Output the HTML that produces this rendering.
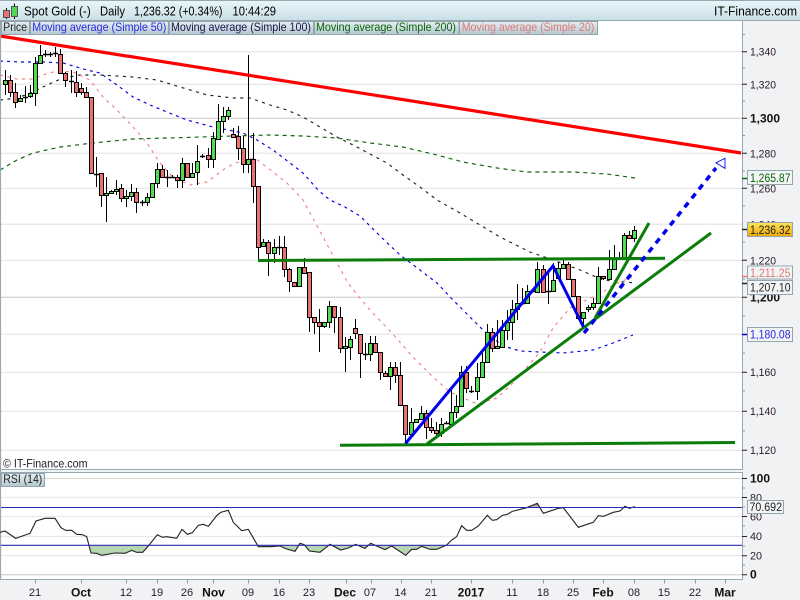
<!DOCTYPE html>
<html><head><meta charset="utf-8"><style>
html,body{margin:0;padding:0;background:#fff}
svg{display:block;font-family:"Liberation Sans",Arial,sans-serif}
</style></head><body>
<svg xmlns="http://www.w3.org/2000/svg" width="800" height="600" viewBox="0 0 800 600">
<defs>
<linearGradient id="hd" x1="0" y1="0" x2="0" y2="1"><stop offset="0" stop-color="#e9f7fb"/><stop offset="1" stop-color="#c9dfe6"/></linearGradient>
<linearGradient id="bt" x1="0" y1="0" x2="0" y2="1"><stop offset="0" stop-color="#e6f0f4"/><stop offset="1" stop-color="#b4c6ce"/></linearGradient>
<linearGradient id="gd" x1="0" y1="0" x2="0" y2="1"><stop offset="0" stop-color="#ffe45c"/><stop offset="1" stop-color="#eeaa00"/></linearGradient>
<clipPath id="main"><rect x="1" y="21" width="741" height="448"/></clipPath>
</defs>
<rect width="800" height="600" fill="#f0f2f4"/>
<rect x="1" y="21" width="741" height="448" fill="#fff"/>
<rect x="1" y="472" width="741" height="107" fill="#fff"/>
<!-- grid -->
<g stroke="#e9e9e9" stroke-width="1.3" fill="none">
<path d="M1 51.7H742M1 84.3H742M1 153.3H742M1 188.3H742M1 224.3H742M1 260.3H742M1 334.3H742M1 372.3H742M1 411.3H742M1 450.3H742M1 497.5H742M1 516.5H742M1 536.5H742M1 555.7H742"/>
<path stroke="#d8d8d8" d="M1 118.3H742M1 297.3H742M1 478.5H742M1 574.7H742"/>
</g>
<!-- moving averages -->
<g fill="none" stroke-width="1.15" clip-path="url(#main)">
<polyline stroke="#0000e0" stroke-dasharray="3 4" points="0,61 20,62 43,62 63,63 87,70 100,73 117,85 133,97 150,105 167,112 187,120 213,127 243,133 257,140 273,150 290,163 303,173 318,190 330,200 345,207 360,216 380,236 400,255 420,270 437,283 453,300 470,317 483,330 503,346 520,351 540,352 563,353 593,350 613,343 633,335"/>
<polyline stroke="#222" stroke-dasharray="3 4.5" points="0,100 17,98 33,92 47,85 63,78 80,75 100,75 133,77 157,80 180,87 207,95 233,98 250,98 270,105 287,110 303,117 320,127 337,137 353,145 370,154 387,163 403,175 420,187 437,200 460,213 480,225 500,237 530,252 553,260 580,270 603,280 635,283"/>
<polyline stroke="#0a640a" stroke-dasharray="4 4" points="0,170 17,160 33,153 60,147 93,143 133,139 167,138 200,137 233,136 270,135 303,136 337,138 370,143 403,147 437,155 463,162 497,168 527,172 573,172 607,174 635,178"/>
<polyline stroke="#ea8484" stroke-dasharray="3 4.5" points="0,75 17,79 33,79 43,75 57,71 73,72 90,80 103,97 117,110 133,127 147,143 160,163 173,177 190,185 207,182 227,167 243,160 255,158 273,172 287,183 303,200 322,235 337,263 348,283 359,297 370,310 392,333 413,357 433,377 450,392 477,404 497,398 513,383 527,367 540,352 553,328 570,308 603,292 613,285 632,277"/>
</g>
<!-- wicks -->
<path fill="none" stroke="#000" stroke-width="1" d="M5.5 70V95M10.5 75V97M15.5 83V108M20.5 95V102M25.5 86V103M30.5 85V98M35.5 57V106M40.5 45V63M45.5 50V57M50.5 52V57M55.5 47V57M60.5 49V73M65.5 72V87M71.5 70V93M76.5 71V97M81.5 83V95M86.5 87V97M96.5 157V187M101.5 173V207M106.5 177V222M111.5 190V194M116.5 180V195M121.5 184V202M126.5 190V207M131.5 184V201M136.5 188V213M142.5 200V206M147.5 193V206M157.5 163V188M162.5 165V178M167.5 170V187M172.5 175V178M177.5 175V188M182.5 158V188M192.5 163V178M197.5 145V185M202.5 154V158M208.5 148V168M213.5 132V168M218.5 104V139M223.5 107V133M228.5 107V120M233.5 128V137M238.5 126V160M243.5 136V173M248.5 55V173M253.5 133V203M258.5 186V262M263.5 239V247M268.5 240V276M274.5 239V263M279.5 236V255M284.5 236V277M289.5 268V292M294.5 282V287M304.5 258V273M309.5 272V332M314.5 317V334M319.5 309V352M324.5 322V328M329.5 301V328M334.5 306V333M340.5 307V353M345.5 337V372M350.5 336V360M355.5 319V339M360.5 334V378M365.5 343V360M370.5 336V361M375.5 336V353M380.5 352V380M385.5 371V376M390.5 362V390M395.5 362V383M400.5 362V405M405.5 405V443M411.5 408V437M416.5 419V423M421.5 406V419M426.5 410V439M431.5 418V433M436.5 422V437M441.5 418V437M446.5 421V424M451.5 388V425M456.5 395V418M461.5 366V406M466.5 366V393M471.5 386V393M477.5 363V400M482.5 353V378M487.5 324V362M492.5 328V352M497.5 320V349M502.5 320V347M507.5 310V340M512.5 300V340M517.5 284V320M522.5 288V305M527.5 285V303M537.5 262V292M543.5 265V292M548.5 269V304M553.5 263V291M558.5 262V278M563.5 260V268M568.5 262V279M578.5 296V320M583.5 312V327M588.5 305V312M593.5 298V310M598.5 267V303M603.5 276V280M609.5 250V279M614.5 245V269M619.5 252V260M624.5 233V258M629.5 231V238M634.5 226V242"/>
<!-- doji -->
<path fill="none" stroke="#000" stroke-width="1.4" d="M23 97.5h5M43 54.5h5M48 54.5h5M53 53.5h5M69 81.5h5M94 174.5h5M140 202.5h5M165 177.5h5M170 177.5h5M200 156.5h5M277 247.5h5M363 354.5h5M444 423.5h5M469 391.5h5M520 303.5h5M530 291.5h5M546 291.5h5M617 258.5h5"/>
<!-- red bodies -->
<path fill="#ec7070" stroke="#000" stroke-width="1" d="M8.5 80.5h4v12h-4zM13.5 92.5h4v10h-4zM58.5 54.5h4v19h-4zM63.5 73.5h4v7h-4zM74.5 82.5h4v10h-4zM79.5 88.5h4v4h-4zM84.5 92.5h4v5h-4zM89.5 97.5h4v76h-4zM99.5 173.5h4v22h-4zM119.5 188.5h4v10h-4zM134.5 192.5h4v10h-4zM160.5 169.5h4v8h-4zM175.5 177.5h4v3h-4zM185.5 163.5h4v14h-4zM206.5 155.5h4v4h-4zM231.5 134.5h4v3h-4zM236.5 136.5h4v12h-4zM241.5 148.5h4v16h-4zM251.5 159.5h4v27h-4zM256.5 186.5h4v61h-4zM266.5 242.5h4v11h-4zM282.5 247.5h4v22h-4zM287.5 269.5h4v12h-4zM292.5 282.5h4v4h-4zM302.5 267.5h4v6h-4zM307.5 272.5h4v45h-4zM312.5 317.5h4v5h-4zM317.5 322.5h4v4h-4zM332.5 306.5h4v11h-4zM338.5 317.5h4v31h-4zM353.5 328.5h4v5h-4zM358.5 334.5h4v19h-4zM373.5 343.5h4v9h-4zM378.5 352.5h4v20h-4zM383.5 373.5h4v3h-4zM393.5 367.5h4v8h-4zM398.5 375.5h4v30h-4zM403.5 405.5h4v29h-4zM424.5 413.5h4v14h-4zM429.5 427.5h4v3h-4zM434.5 430.5h4v3h-4zM464.5 372.5h4v16h-4zM490.5 332.5h4v16h-4zM541.5 269.5h4v23h-4zM566.5 264.5h4v15h-4zM571.5 279.5h4v17h-4zM576.5 296.5h4v22h-4zM601.5 276.5h4v2h-4zM627.5 235.5h4v3h-4z"/>
<!-- green bodies -->
<path fill="#4fdc4f" stroke="#000" stroke-width="1" d="M3.5 80.5h4v4h-4zM18.5 98.5h4v3h-4zM28.5 93.5h4v3h-4zM33.5 63.5h4v30h-4zM38.5 55.5h4v8h-4zM104.5 193.5h4v2h-4zM109.5 191.5h4v2h-4zM114.5 189.5h4v2h-4zM124.5 196.5h4v2h-4zM129.5 192.5h4v4h-4zM145.5 197.5h4v5h-4zM150.5 183.5h4v14h-4zM155.5 169.5h4v14h-4zM180.5 163.5h4v17h-4zM190.5 173.5h4v4h-4zM195.5 161.5h4v11h-4zM211.5 138.5h4v21h-4zM216.5 121.5h4v18h-4zM221.5 116.5h4v5h-4zM226.5 110.5h4v6h-4zM246.5 159.5h4v5h-4zM261.5 242.5h4v4h-4zM272.5 247.5h4v6h-4zM297.5 267.5h4v19h-4zM322.5 322.5h4v4h-4zM327.5 306.5h4v16h-4zM343.5 346.5h4v2h-4zM348.5 339.5h4v8h-4zM368.5 343.5h4v11h-4zM388.5 367.5h4v9h-4zM409.5 422.5h4v12h-4zM414.5 419.5h4v3h-4zM419.5 413.5h4v6h-4zM439.5 424.5h4v9h-4zM449.5 412.5h4v12h-4zM454.5 406.5h4v6h-4zM459.5 372.5h4v34h-4zM475.5 377.5h4v14h-4zM480.5 362.5h4v15h-4zM485.5 332.5h4v30h-4zM495.5 346.5h4v2h-4zM500.5 330.5h4v17h-4zM505.5 322.5h4v8h-4zM510.5 309.5h4v13h-4zM515.5 303.5h4v6h-4zM525.5 291.5h4v12h-4zM535.5 269.5h4v23h-4zM551.5 280.5h4v11h-4zM556.5 268.5h4v10h-4zM561.5 264.5h4v4h-4zM581.5 312.5h4v6h-4zM586.5 307.5h4v2h-4zM591.5 303.5h4v4h-4zM596.5 276.5h4v27h-4zM607.5 269.5h4v10h-4zM612.5 258.5h4v11h-4zM622.5 235.5h4v23h-4zM632.5 230.5h4v8h-4z"/>
<!-- drawn lines -->
<g fill="none" stroke-linecap="butt">
<path d="M0 36L741 153" stroke="#ff0000" stroke-width="3.2"/>
<path d="M258 260.5L665 258.3M340 445.3L735 442.5" stroke="#0a7d0a" stroke-width="3"/>
<path d="M427 444L711 233M595 318L649 223" stroke="#0a7d0a" stroke-width="3"/>
<path d="M405.5 443.5L553 266L583.5 327" stroke="#0000ee" stroke-width="3"/>
<path d="M584 333L716 168" stroke="#0000ee" stroke-width="3.5" stroke-dasharray="6 5.5"/>
<path d="M716 162.8L725 158.3V168.3Z" stroke="#1a1aee" stroke-width="1" fill="#fff"/>
</g>
<!-- borders -->
<g fill="none" stroke="#98a8b2" stroke-width="1">
<path d="M742.5 21V469.5H0M742.5 472V579.5H0M0 472.5H742.5" />
<path d="M.5 21V579" stroke-width="1.2"/>
</g>
<!-- header -->
<rect x="0" y="0" width="800" height="20.5" fill="url(#hd)"/>
<path d="M0 .5H800M0 20.5H800" stroke="#98a8b2" stroke-width="1"/>
<path d="M6.5 8V19M14.5 3.5V19" stroke="#000" stroke-width="1"/>
<rect x="3.5" y="10.5" width="6" height="7" fill="#e87272" stroke="#555"/>
<rect x="11.5" y="6.5" width="6" height="10" fill="#52d552" stroke="#555"/>
<g font-size="13" fill="#000">
<text x="24" y="15.5" textLength="66.7" lengthAdjust="spacingAndGlyphs">Spot Gold (-)</text>
<text x="100" y="15.5" textLength="25" lengthAdjust="spacingAndGlyphs">Daily</text>
<text x="134" y="15.5" textLength="88.5" lengthAdjust="spacingAndGlyphs">1,236.32 (+0.34%)</text>
<text x="232.5" y="15.5" textLength="43.5" lengthAdjust="spacingAndGlyphs">10:44:29</text>
<text x="714" y="15.5" textLength="83" lengthAdjust="spacingAndGlyphs">IT-Finance.com</text>
</g>
<!-- legend -->
<g fill="url(#bt)" stroke="#93a4ae" stroke-width="1">
<rect x="1.5" y="21.5" width="28" height="13"/>
<rect x="30.5" y="21.5" width="138" height="13"/>
<rect x="169.5" y="21.5" width="144" height="13"/>
<rect x="314.5" y="21.5" width="144.5" height="13"/>
<rect x="459.5" y="21.5" width="138" height="13"/>
<rect x="1.5" y="473.5" width="43" height="13"/>
</g>
<g font-size="11.8">
<text x="3.3" y="31" fill="#222" textLength="23.7" lengthAdjust="spacingAndGlyphs">Price</text>
<text x="32.3" y="31" fill="#2a2ae0" textLength="134" lengthAdjust="spacingAndGlyphs">Moving average (Simple 50)</text>
<text x="171" y="31" fill="#15154a" textLength="140" lengthAdjust="spacingAndGlyphs">Moving average (Simple 100)</text>
<text x="316" y="31" fill="#0a640a" textLength="140" lengthAdjust="spacingAndGlyphs">Moving average (Simple 200)</text>
<text x="461.7" y="31" fill="#e07878" textLength="132.6" lengthAdjust="spacingAndGlyphs">Moving average (Simple 20)</text>
<text x="3.3" y="483" fill="#222" textLength="39" lengthAdjust="spacingAndGlyphs">RSI (14)</text>
</g>
<text x="3" y="467.3" font-size="11.8" fill="#222" textLength="84.5" lengthAdjust="spacingAndGlyphs">© IT-Finance.com</text>
<!-- axis ticks -->
<path fill="none" stroke="#8a9aa4" d="M742 34.5h3M742 68h3M742 101h3M742 135.5h3M742 171h3M742 206h3M742 242h3M742 279h3M742 316h3M742 353h3M742 391h3M742 431h3M742 488h3M742 507h3M742 526h3M742 546h3M742 565h3"/>
<path fill="none" stroke="#222" d="M742 51.7h5M742 84.3h5M742 118.3h5M742 153.3h5M742 188.3h5M742 260.3h5M742 297.3h5M742 372.3h5M742 411.3h5M742 450.3h5M742 478.5h5M742 497.5h5M742 516.5h5M742 536.5h5M742 555.7h5M742 574.7h5"/>
<path fill="none" stroke="#8a9aa4" d="M35.5 579.5v4M81.5 579.5v4M126.5 579.5v4M157.5 579.5v4M187.5 579.5v4M213.5 579.5v4M248.5 579.5v4M279.5 579.5v4M309.5 579.5v4M346.5 579.5v4M371.5 579.5v4M401.5 579.5v4M431.5 579.5v4M471.5 579.5v4M512.5 579.5v4M543.5 579.5v4M573.5 579.5v4M603.5 579.5v4M634.5 579.5v4M664.5 579.5v4M695.5 579.5v4M725.5 579.5v4"/>
<path fill="none" stroke-width="1.5" d="M742 178.5h5" stroke="#0a640a"/>
<path fill="none" stroke-width="1.5" d="M742 229.5h5" stroke="#222"/>
<path fill="none" stroke-width="1.5" d="M742 276.5h5" stroke="#e07878"/>
<path fill="none" stroke-width="1.5" d="M742 283.5h5" stroke="#222"/>
<path fill="none" stroke-width="1.5" d="M742 334.5h5" stroke="#0000ee"/>
<!-- axis labels -->
<g font-size="11" fill="#2a1a2a">
<text x="750" y="55.5" textLength="26" lengthAdjust="spacingAndGlyphs">1,340</text>
<text x="750" y="88.5" textLength="26" lengthAdjust="spacingAndGlyphs">1,320</text>
<text x="750" y="157.5" textLength="26" lengthAdjust="spacingAndGlyphs">1,280</text>
<text x="750" y="192.5" textLength="26" lengthAdjust="spacingAndGlyphs">1,260</text>
<text x="750" y="228.5" textLength="26" lengthAdjust="spacingAndGlyphs">1,240</text>
<text x="750" y="264.5" textLength="26" lengthAdjust="spacingAndGlyphs">1,220</text>
<text x="750" y="376" textLength="26" lengthAdjust="spacingAndGlyphs">1,160</text>
<text x="750" y="415" textLength="26" lengthAdjust="spacingAndGlyphs">1,140</text>
<text x="750" y="454" textLength="26" lengthAdjust="spacingAndGlyphs">1,120</text>
<text x="750" y="501.5" textLength="12" lengthAdjust="spacingAndGlyphs">80</text>
<text x="750" y="520.5" textLength="12" lengthAdjust="spacingAndGlyphs">60</text>
<text x="750" y="540" textLength="12" lengthAdjust="spacingAndGlyphs">40</text>
<text x="750" y="559.5" textLength="12" lengthAdjust="spacingAndGlyphs">20</text>
</g>
<g font-size="12" font-weight="bold" fill="#111">
<text x="750" y="122.5">1,300</text>
<text x="750" y="301.5">1,200</text>
<text x="750" y="482.5">100</text>
<text x="750" y="578.5">0</text>
</g>
<!-- RSI -->
<g transform="translate(0,450) scale(.33333)">
<polygon fill="#b6d6b2" points="265,286 273,309 290,310 305,316 345,309 375,310 395,301 410,307 428,307 445,286"/>
<polygon fill="#b6d6b2" points="772,286 775,290 810,290 840,288 860,297 885,304 896,286"/>
<polygon fill="#b6d6b2" points="915,286 928,303 960,307 984,286"/>
<polygon fill="#b6d6b2" points="996,286 1022,300 1045,294 1062,286"/>
<polygon fill="#b6d6b2" points="1074,286 1095,295 1105,286"/>
<polygon fill="#b6d6b2" points="1125,286 1155,299 1175,288 1217,316 1235,298 1250,298 1265,289 1290,298 1310,298 1338,286"/>
<polygon fill="#c4a8a8" points="1590,172 1612,160 1620,172"/>
<polyline fill="none" stroke="#222" stroke-width="3.3" points="0,247 15,243 47,265 90,250 108,213 135,205 165,205 183,233 197,241 215,241 230,253 247,254 260,260 273,309 290,310 305,316 345,309 375,310 395,301 410,307 428,307 445,288 472,254 487,262 500,260 530,265 546,238 562,253 577,248 595,226 610,223 625,229 650,197 662,187 685,181 700,217 725,242 745,238 775,290 810,290 840,288 860,297 885,304 900,280 913,284 928,303 960,307 990,283 1022,300 1045,294 1067,283 1095,295 1112,280 1155,299 1175,288 1217,316 1235,298 1250,298 1265,289 1290,298 1310,298 1340,285 1355,270 1370,260 1385,227 1400,241 1415,241 1435,228 1462,196 1477,211 1490,209 1507,196 1522,193 1537,184 1580,173 1612,160 1630,190 1675,175 1690,173 1735,232 1780,217 1795,197 1810,199 1840,187 1860,183 1875,169 1888,175 1905,170"/>
</g>
<path d="M1 507.5H742M1 545.3H742" stroke="#2a2ab0" stroke-width="1.1" fill="none"/>
<!-- date labels -->
<g font-size="11" fill="#2a1a2a" text-anchor="middle">
<text x="35" y="596">21</text><text x="126" y="596">12</text><text x="157" y="596">19</text><text x="187" y="596">26</text><text x="248" y="596">09</text><text x="279" y="596">16</text><text x="309" y="596">23</text><text x="370" y="596">07</text><text x="400.5" y="596">14</text><text x="431" y="596">21</text><text x="512" y="596">11</text><text x="543" y="596">18</text><text x="573" y="596">25</text><text x="634" y="596">08</text><text x="664" y="596">15</text><text x="695" y="596">22</text>
</g>
<g font-size="12" font-weight="bold" fill="#111" text-anchor="middle">
<text x="81" y="596.3">Oct</text><text x="213.5" y="596.3">Nov</text><text x="345" y="596.3">Dec</text><text x="471" y="596.3">2017</text><text x="603" y="596.3">Feb</text><text x="725" y="596.3">Mar</text>
</g>
<!-- value boxes -->
<g stroke="#93a4ae" stroke-width="1">
<rect x="747.5" y="170.5" width="45" height="14" fill="#f2f4f5"/>
<rect x="747.5" y="222.5" width="45" height="14" fill="url(#gd)"/>
<rect x="747.5" y="266" width="45" height="13" fill="#f2f4f5"/>
<rect x="747.5" y="280.5" width="45" height="14" fill="#f2f4f5"/>
<rect x="747.5" y="327.5" width="45" height="14" fill="#f2f4f5"/>
<rect x="747.5" y="500.5" width="36" height="13" fill="#f2f4f5"/>
</g>
<g font-size="11.6">
<text x="750" y="182" fill="#0a640a" textLength="40.5" lengthAdjust="spacingAndGlyphs">1,265.87</text>
<text x="750" y="234" fill="#222" textLength="40.5" lengthAdjust="spacingAndGlyphs">1,236.32</text>
<text x="750" y="277" fill="#e07878" textLength="40.5" lengthAdjust="spacingAndGlyphs">1,211.25</text>
<text x="750" y="291.5" fill="#222" textLength="40.5" lengthAdjust="spacingAndGlyphs">1,207.10</text>
<text x="750" y="338.5" fill="#2a2ae0" textLength="40.5" lengthAdjust="spacingAndGlyphs">1,180.08</text>
<text x="749.5" y="511" fill="#222" textLength="32.5" lengthAdjust="spacingAndGlyphs">70.692</text>
</g>
</svg>
</body></html>
